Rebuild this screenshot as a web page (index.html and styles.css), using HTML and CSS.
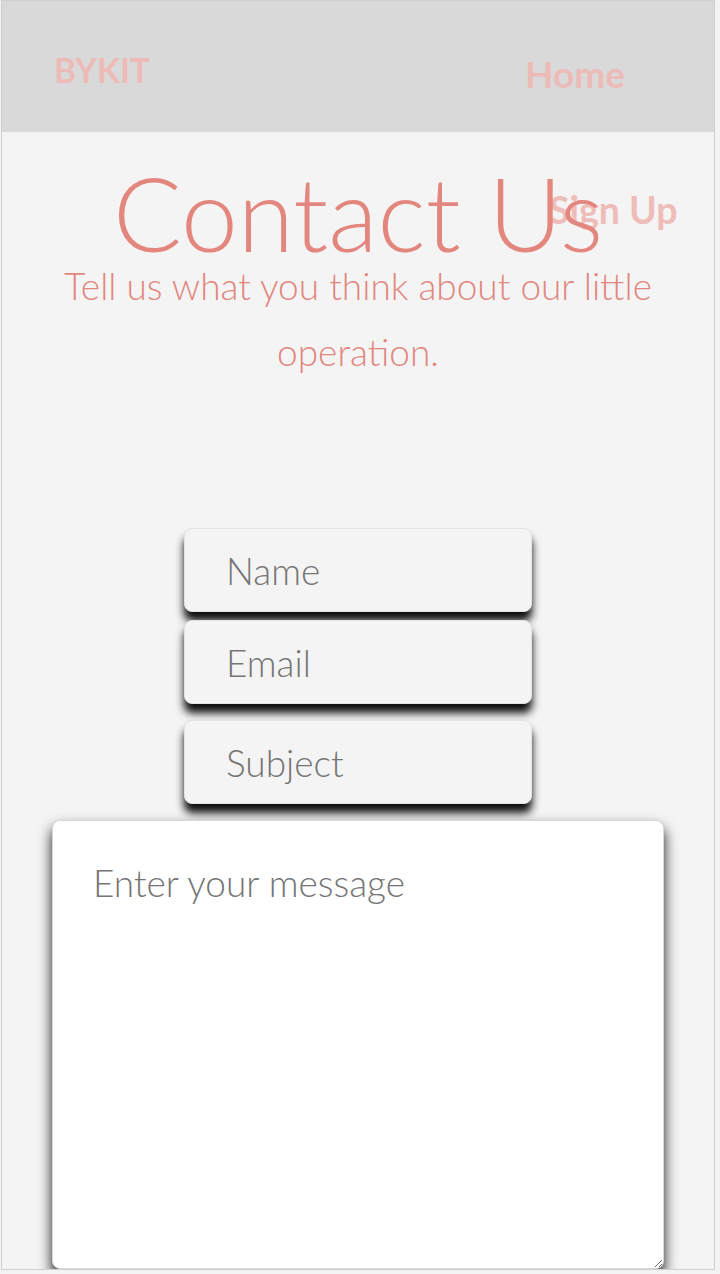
FILE: index.html
```html
<!DOCTYPE html>
<html lang="en">
<head>
<meta charset="utf-8">
<title>Contact Us - BYKIT</title>
<link rel="stylesheet" href="styles.css">
</head>
<body>
<div class="frame">
  <header class="topbar">
    <div class="logo">BYKIT</div>
    <nav class="nav">
      <a class="nav-link" href="#">Home</a>
      <a class="nav-link nav-link--shift" href="#">Sign Up</a>
    </nav>
  </header>
  <main class="contact">
    <h1 class="title">Contact Us</h1>
    <p class="lead">Tell us what you think about our little operation.</p>
    <form class="form">
      <input class="field field--first" type="text" placeholder="Name">
      <input class="field" type="email" placeholder="Email">
      <input class="field" type="text" placeholder="Subject">
      <textarea class="message" placeholder="Enter your message"></textarea>
    </form>
  </main>
</div>
</body>
</html>
```

FILE: styles.css
```css
* { box-sizing: border-box; }

html, body {
  margin: 0;
  padding: 0;
  background: #f3f3f3;
}

body {
  font-family: Lato, "Liberation Sans", sans-serif;
}

.frame {
  margin-left: 1px;
  width: 714px;
  height: 1270px;
  border: 1px solid #cfcfcf;
  background: #f4f4f4;
  overflow: hidden;
}

.topbar {
  height: 131px;
  background: #d9d9d9;
  display: grid;
  grid-template-columns: 471px 1fr;
  padding-left: 52px;
}

.logo {
  padding-top: 52px;
  font-size: 33.5px;
  line-height: 34px;
  font-weight: 700;
  color: #edbbb7;
}

.nav {
  display: flex;
  flex-direction: column;
  align-items: flex-start;
  gap: 99px;
  padding-top: 54px;
}

.nav-link {
  font-size: 37px;
  line-height: 37px;
  font-weight: 700;
  color: #edbbb7;
  text-decoration: none;
  white-space: nowrap;
}

.nav-link--shift {
  margin-left: 24px;
  font-size: 37.5px;
  color: #efbdb9;
}

.contact {
  text-align: center;
}

.title {
  margin: 41px 0 0;
  font-size: 102px;
  line-height: 80px;
  font-weight: 300;
  color: #e2867e;
}

.lead {
  margin: 0 auto;
  max-width: 620px;
  font-size: 37px;
  line-height: 66px;
  font-weight: 300;
  color: #e2867e;
}

.form {
  margin-top: 143px;
  display: flex;
  flex-direction: column;
  align-items: center;
}

.field {
  width: 348px;
  height: 84px;
  margin: 0 0 16px;
  padding: 0 41px;
  border: 1px solid #e2e2e2;
  border-radius: 8px;
  background: #f4f4f4;
  font-family: Lato, "Liberation Sans", sans-serif;
  font-size: 37px;
  font-weight: 300;
  color: #555;
  box-shadow: 0 9px 8px rgba(0, 0, 0, 0.95);
  outline: none;
}

.field--first {
  margin-bottom: 8px;
}

.field::placeholder,
.message::placeholder {
  color: #757575;
}

.message {
  display: block;
  width: 612px;
  height: 449px;
  padding: 40px;
  border: 1px solid #d8d8d8;
  border-radius: 8px;
  background: #fff;
  font-family: Lato, "Liberation Sans", sans-serif;
  font-size: 37px;
  font-weight: 300;
  line-height: 1.2;
  color: #555;
  box-shadow: 0 8px 14px rgba(0, 0, 0, 0.9);
  outline: none;
}
```
